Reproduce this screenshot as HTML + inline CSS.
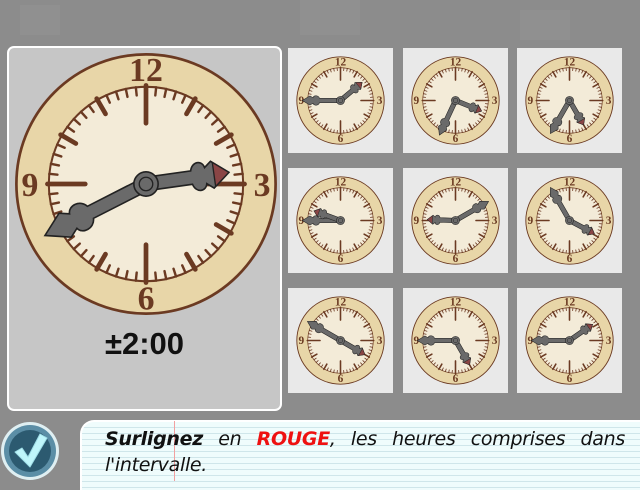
<!DOCTYPE html>
<html><head><meta charset="utf-8"><style>
*{margin:0;padding:0;box-sizing:border-box}
body{width:640px;height:480px;overflow:hidden;background:#8c8c8c;position:relative;font-family:"Liberation Sans",sans-serif}
.bgsq{position:absolute;background:rgba(255,255,255,0.04)}
.panel{position:absolute;left:7px;top:46px;width:275px;height:365px;border:2px solid #fff;border-radius:7px;background:#c6c6c6}
.tile{position:absolute;width:105px;height:105px;background:#e9e9e9}
.tile svg{position:absolute;left:7px;top:7px;width:91px;height:91px}
.num{font-family:"Liberation Serif",serif;font-weight:bold;fill:#6b3a22;text-anchor:middle;dominant-baseline:central}
.paper{position:absolute;left:80px;top:420px;width:570px;height:70px;border-radius:14px 0 0 0;
background:#effcfc repeating-linear-gradient(to bottom,#effcfc 0 5px,#cfe6ea 5px 6px);border-top:2px solid #fff;border-left:2px solid #fff}
.margin{position:absolute;left:174px;top:421px;width:1px;height:60px;background:#f2a0a0}
.txt{position:absolute;left:105px;top:426px;width:520px;font-size:19px;font-style:italic;line-height:26px;text-align:justify;text-align-last:left;color:#111;font-family:"DejaVu Sans","Liberation Sans",sans-serif;letter-spacing:-0.3px}
</style></head><body>
<div class="bgsq" style="left:20px;top:5px;width:40px;height:30px"></div>
<div class="bgsq" style="left:300px;top:0;width:60px;height:35px"></div>
<div class="bgsq" style="left:520px;top:10px;width:50px;height:30px"></div>
<div class="panel">
<svg id="big" viewBox="-100 -100 200 200" style="position:absolute;left:2px;top:1px;width:270px;height:270px">
<text class="num" x="0" y="-84" font-size="25">12</text>
<text class="num" x="86" y="1" font-size="25">3</text>
<text class="num" x="0" y="85" font-size="25">6</text>
<text class="num" x="-86" y="1" font-size="25">9</text>
</svg>
<div style="position:absolute;left:0;width:271px;top:278px;text-align:center;font-size:31px;font-weight:bold;color:#111">±2:00</div>
</div>
<div class="tile" style="left:288px;top:48px"><svg viewBox="-100 -100 200 200"><text class="num" x="0" y="-84" font-size="25">12</text><text class="num" x="86" y="1" font-size="25">3</text><text class="num" x="0" y="85" font-size="25">6</text><text class="num" x="-86" y="1" font-size="25">9</text></svg></div>
<div class="tile" style="left:403px;top:48px"><svg viewBox="-100 -100 200 200"><text class="num" x="0" y="-84" font-size="25">12</text><text class="num" x="86" y="1" font-size="25">3</text><text class="num" x="0" y="85" font-size="25">6</text><text class="num" x="-86" y="1" font-size="25">9</text></svg></div>
<div class="tile" style="left:517px;top:48px"><svg viewBox="-100 -100 200 200"><text class="num" x="0" y="-84" font-size="25">12</text><text class="num" x="86" y="1" font-size="25">3</text><text class="num" x="0" y="85" font-size="25">6</text><text class="num" x="-86" y="1" font-size="25">9</text></svg></div>
<div class="tile" style="left:288px;top:168px"><svg viewBox="-100 -100 200 200"><text class="num" x="0" y="-84" font-size="25">12</text><text class="num" x="86" y="1" font-size="25">3</text><text class="num" x="0" y="85" font-size="25">6</text><text class="num" x="-86" y="1" font-size="25">9</text></svg></div>
<div class="tile" style="left:403px;top:168px"><svg viewBox="-100 -100 200 200"><text class="num" x="0" y="-84" font-size="25">12</text><text class="num" x="86" y="1" font-size="25">3</text><text class="num" x="0" y="85" font-size="25">6</text><text class="num" x="-86" y="1" font-size="25">9</text></svg></div>
<div class="tile" style="left:517px;top:168px"><svg viewBox="-100 -100 200 200"><text class="num" x="0" y="-84" font-size="25">12</text><text class="num" x="86" y="1" font-size="25">3</text><text class="num" x="0" y="85" font-size="25">6</text><text class="num" x="-86" y="1" font-size="25">9</text></svg></div>
<div class="tile" style="left:288px;top:288px"><svg viewBox="-100 -100 200 200"><text class="num" x="0" y="-84" font-size="25">12</text><text class="num" x="86" y="1" font-size="25">3</text><text class="num" x="0" y="85" font-size="25">6</text><text class="num" x="-86" y="1" font-size="25">9</text></svg></div>
<div class="tile" style="left:403px;top:288px"><svg viewBox="-100 -100 200 200"><text class="num" x="0" y="-84" font-size="25">12</text><text class="num" x="86" y="1" font-size="25">3</text><text class="num" x="0" y="85" font-size="25">6</text><text class="num" x="-86" y="1" font-size="25">9</text></svg></div>
<div class="tile" style="left:517px;top:288px"><svg viewBox="-100 -100 200 200"><text class="num" x="0" y="-84" font-size="25">12</text><text class="num" x="86" y="1" font-size="25">3</text><text class="num" x="0" y="85" font-size="25">6</text><text class="num" x="-86" y="1" font-size="25">9</text></svg></div>

<div class="paper"></div>
<div class="margin"></div>
<div class="txt"><b>Surlignez</b> en <b style="color:#ee1111">ROUGE</b>, les heures comprises dans l'intervalle.</div>
<svg style="position:absolute;left:0;top:420px;width:62px;height:62px" viewBox="0 0 62 62">
<circle cx="30" cy="31" r="29" fill="#dfeff2"/>
<circle cx="30" cy="31" r="26" fill="#5b8ea6"/>
<circle cx="30" cy="31" r="21" fill="#2c5a70"/>
<path d="M15 32 L22 28 L28 37 L40 14 L47 18 L30 47 Z" fill="#bff6fb" stroke="#9fdfe8" stroke-width="1" stroke-linejoin="round"/>
</svg>
<script>
var NS="http://www.w3.org/2000/svg";
function add(p,t,a){var e=document.createElementNS(NS,t);for(var k in a)e.setAttribute(k,a[k]);p.appendChild(e);return e;}
function face(s){
  var g=document.createElementNS(NS,'g');
  add(g,'circle',{cx:0,cy:0,r:96,fill:'#e8d6a8',stroke:'#6b3a22','stroke-width':2});
  add(g,'circle',{cx:0,cy:0,r:72,fill:'#f4ead6',stroke:'#6b3a22','stroke-width':1.5});
  add(g,'circle',{cx:0,cy:0,r:67,fill:'#f3ebd8'});
  for(var i=0;i<60;i++){var a=i*6*Math.PI/180,sx=Math.sin(a),cy=-Math.cos(a);
    var r1=i%5==0?(i%15==0?45:60):66, r2=i%5==0?73:72;
    add(g,'line',{x1:sx*r1,y1:cy*r1,x2:sx*r2,y2:cy*r2,stroke:'#6b3a22','stroke-width':i%5==0?3.5:1.8,'stroke-linecap':'round'});}
  s.insertBefore(g,s.firstChild);
}
function hand(s,deg,len,red){
  var g=add(s,'g',{transform:'rotate('+deg+')'});
  add(g,'path',{d:'M-5 0 L-5 '+(-len*0.55)+' C-12 '+(-len*0.58)+' -12 '+(-len*0.7)+' -6 '+(-len*0.72)+' L-10 '+(-len*0.8)+' L0 '+(-len)+' L10 '+(-len*0.8)+' L6 '+(-len*0.72)+' C12 '+(-len*0.7)+' 12 '+(-len*0.58)+' 5 '+(-len*0.55)+' L5 0 Z',fill:'#6a6a6a',stroke:'#222','stroke-width':1.2});
  if(red)add(g,'path',{d:'M-9 '+(-len*0.82)+' L0 '+(-len)+' L9 '+(-len*0.82)+' Z',fill:'#8a4545',stroke:'#222','stroke-width':1});
}
function clock(s,h,m){face(s);hand(s,m,84,false);hand(s,h,62,true);
  add(s,'circle',{cx:0,cy:0,r:9,fill:'#6a6a6a',stroke:'#222','stroke-width':1.2});
  add(s,'circle',{cx:0,cy:0,r:5,fill:'#6a6a6a',stroke:'#222','stroke-width':1});}
var svgs=document.querySelectorAll('svg[viewBox="-100 -100 200 200"]');
var T=[[82,243],[50,270],[112,205],[150,210],[290,270],[272,60],[118,330],[120,300],[150,270],[55,270]];
for(var i=0;i<svgs.length;i++)clock(svgs[i],T[i][0],T[i][1]);
</script>
</body></html>
